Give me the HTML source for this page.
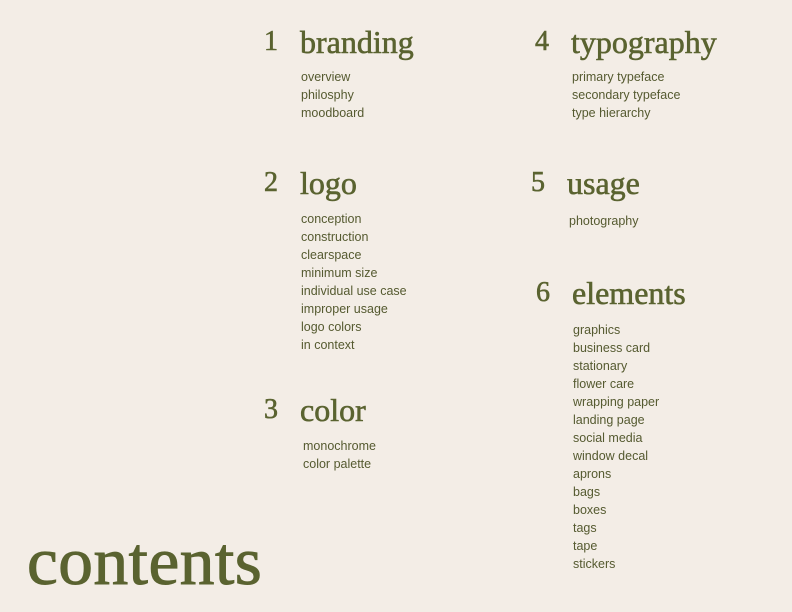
<!DOCTYPE html>
<html><head><meta charset="utf-8"><style>
html,body{margin:0;padding:0}
body{width:792px;height:612px;background:#f3ede6;position:relative;overflow:hidden;color:#5a6330}
.h{position:absolute;font-family:"Liberation Serif",serif;font-size:32px;line-height:32px;white-space:nowrap;-webkit-text-stroke:0.6px #5a6330}
.n{position:absolute;font-family:"Liberation Serif",serif;font-size:28px;line-height:32px;-webkit-text-stroke:0.6px #5a6330}
.l{position:absolute;font-family:"Liberation Sans",sans-serif;font-size:12.5px;line-height:18px;color:#555a30;white-space:nowrap}
.c{position:absolute;left:27px;top:527px;font-family:"Liberation Serif",serif;font-size:68px;line-height:68px;letter-spacing:0.5px;transform:scaleX(1.02);transform-origin:left;-webkit-text-stroke:1px #5a6330}
</style></head><body>
<div class="n" style="left:264px;top:26px">1</div><div class="h" style="left:300px;top:26px">branding</div>
<div class="l" style="left:301px;top:68px">overview<br>philosphy<br>moodboard</div>

<div class="n" style="left:264px;top:167px">2</div><div class="h" style="left:300px;top:167px">logo</div>
<div class="l" style="left:301px;top:210px">conception<br>construction<br>clearspace<br>minimum size<br>individual use case<br>improper usage<br>logo colors<br>in context</div>

<div class="n" style="left:264px;top:394px">3</div><div class="h" style="left:300px;top:394px">color</div>
<div class="l" style="left:303px;top:437px">monochrome<br>color palette</div>

<div class="n" style="left:535px;top:26px">4</div><div class="h" style="left:571px;top:26px">typography</div>
<div class="l" style="left:572px;top:68px">primary typeface<br>secondary typeface<br>type hierarchy</div>

<div class="n" style="left:531px;top:167px">5</div><div class="h" style="left:567px;top:167px">usage</div>
<div class="l" style="left:569px;top:212px">photography</div>

<div class="n" style="left:536px;top:277px">6</div><div class="h" style="left:572px;top:277px">elements</div>
<div class="l" style="left:573px;top:321px">graphics<br>business card<br>stationary<br>flower care<br>wrapping paper<br>landing page<br>social media<br>window decal<br>aprons<br>bags<br>boxes<br>tags<br>tape<br>stickers</div>

<div class="c">contents</div>
</body></html>
